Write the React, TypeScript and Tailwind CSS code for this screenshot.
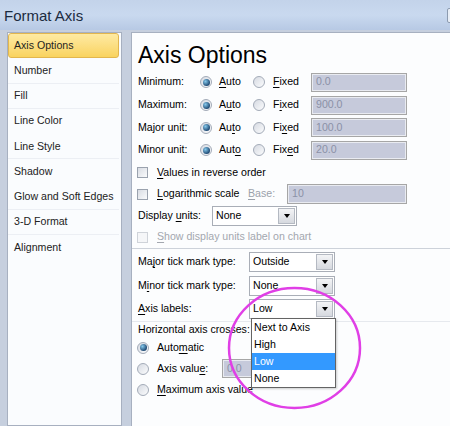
import type { ReactNode } from "react";

function U({ children }: { children: ReactNode }) {
  return <span className="underline decoration-[1px] underline-offset-[2px]">{children}</span>;
}

function Radio({ on = false }: { on?: boolean }) {
  return (
    <span className="flex h-[12px] w-[12px] shrink-0 items-center justify-center rounded-full border border-[#a3abb8] bg-gradient-to-br from-[#d6dae2] to-[#fbfcfd]">
      {on && (
        <span className="h-[7px] w-[7px] rounded-full bg-[radial-gradient(circle_at_35%_35%,#86c9ec,#1f4a74_70%)]" />
      )}
    </span>
  );
}

function Check({ disabled = false }: { disabled?: boolean }) {
  return (
    <span
      className={
        disabled
          ? "h-[11px] w-[11px] shrink-0 border border-[#cfd3d9] bg-[#f5f6f8]"
          : "h-[11px] w-[11px] shrink-0 border border-[#9aa2ae] bg-gradient-to-br from-[#d8dce3] to-[#fafbfc]"
      }
    />
  );
}

function Field({ value, className = "" }: { value: string; className?: string }) {
  return (
    <div
      className={`flex shrink-0 items-center border border-[#a6a6a6] bg-[#c6cadb] pl-[4px] text-[#8b91a7] shadow-[inset_0_0_0_1px_#e9ebf1] ${className}`}
    >
      {value}
    </div>
  );
}

function Select({ value, className = "", children }: { value: string; className?: string; children?: ReactNode }) {
  return (
    <div className={`relative flex h-[20px] shrink-0 items-center border border-[#a9aeb7] bg-white pl-[3px] pr-[1px] ${className}`}>
      <span className="flex-1">{value}</span>
      <span className="flex h-[16px] w-[17px] items-center justify-center border border-[#b4b9c2] bg-gradient-to-b from-[#f3f4f6] to-[#d6d9df]">
        <span className="h-0 w-0 border-x-[3.5px] border-t-[4px] border-x-transparent border-t-black" />
      </span>
      {children}
    </div>
  );
}

const sideItems = [
  { label: "Axis Options", active: true },
  { label: "Number", sep: true },
  { label: "Fill", sep: true },
  { label: "Line Color" },
  { label: "Line Style", sep: true },
  { label: "Shadow" },
  { label: "Glow and Soft Edges", sep: true },
  { label: "3-D Format", sep: true },
  { label: "Alignment" },
];

const unitRows = [
  { label: "Minimum:", auto: <><U>A</U>uto</>, fixed: <><U>F</U>ixed</>, value: "0.0" },
  { label: "Maximum:", auto: <>A<U>u</U>to</>, fixed: <>F<U>i</U>xed</>, value: "900.0" },
  { label: "Major unit:", auto: <>Au<U>t</U>o</>, fixed: <>Fi<U>x</U>ed</>, value: "100.0" },
  { label: "Minor unit:", auto: <>Aut<U>o</U></>, fixed: <>Fix<U>e</U>d</>, value: "20.0" },
];

export default function App() {
  return (
    <div className="relative h-[426px] w-[450px] overflow-hidden bg-[#c6cfde] font-['Liberation_Sans',Arial,sans-serif] text-[10.6px] text-black">
      {/* title bar */}
      <div className="flex h-[30px] items-center bg-gradient-to-b from-[#c3d3ea] via-[#c9d9ef] to-[#b7c9e4] pl-[4px]">
        <span className="text-[15px] leading-none text-[#1b2b40]">Format Axis</span>
        <div className="-mr-[7px] ml-auto h-[15px] w-[10px] shrink-0 rounded-[2px] border border-[#8c9bb0] bg-[#e8eef6]" />
      </div>

      <div className="flex h-[396px] gap-[9px] pl-[7px] pt-[2px]">
        {/* left nav */}
        <div className="w-[115px] shrink-0 border border-[#a7b0c0] bg-[#fafcfe]">
          {sideItems.map((it) =>
            it.active ? (
              <div
                key={it.label}
                className="mr-[2px] flex h-[25.25px] items-center rounded-[3px] border border-[#e2b64e] bg-gradient-to-b from-[#feeaa2] to-[#f9d35e] pl-[5px] text-[#1f1f1f]"
              >
                {it.label}
              </div>
            ) : (
              <div
                key={it.label}
                className={`mr-[2px] flex h-[25.25px] items-center pl-[6px] text-[#222] ${it.sep ? "shadow-[inset_0_-1px_0_#eceff4]" : ""}`}
              >
                {it.label}
              </div>
            )
          )}
        </div>

        {/* options panel */}
        <div className="flex-1 border-l border-t border-[#a7b0c0] bg-[#fcfdfe] pl-[6px]">
          <div className="mt-[11px] h-[23px] text-[23px] leading-[23px]">Axis Options</div>

          <div className="mt-[4px]">
            {unitRows.map((r) => (
              <div key={r.label} className="flex h-[22.7px] items-center">
                <span className="w-[62px] shrink-0">{r.label}</span>
                <div className="flex w-[53px] shrink-0 items-center gap-[7px]">
                  <Radio on />
                  <span>{r.auto}</span>
                </div>
                <div className="flex w-[58px] shrink-0 items-center gap-[8px]">
                  <Radio />
                  <span>{r.fixed}</span>
                </div>
                <Field value={r.value} className="h-[19px] w-[96px]" />
              </div>
            ))}
          </div>

          <div className="-ml-[1px] flex h-[21.5px] items-center gap-[9px]">
            <Check />
            <span><U>V</U>alues in reverse order</span>
          </div>
          <div className="-ml-[1px] flex h-[21.5px] items-center">
            <Check />
            <span className="ml-[9px] w-[91px] shrink-0"><U>L</U>ogarithmic scale</span>
            <span className="w-[39px] shrink-0 text-[#9ba1ab]"><U>B</U>ase:</span>
            <Field value="10" className="h-[20px] w-[120px]" />
          </div>
          <div className="flex h-[21.5px] items-center">
            <span className="w-[74px] shrink-0">Display <U>u</U>nits:</span>
            <Select value="None" className="w-[85px]" />
          </div>
          <div className="-ml-[1px] flex h-[21.5px] items-center gap-[9px] text-[#a3a7af]">
            <Check disabled />
            <span><U>S</U>how display units label on chart</span>
          </div>

          <div className="-ml-[6px] h-px bg-[#cdd2da]" />

          <div className="pt-[1.5px]">
            <div className="flex h-[23.5px] items-center">
              <span className="w-[111px] shrink-0">Ma<U>j</U>or tick mark type:</span>
              <Select value="Outside" className="w-[86px]" />
            </div>
            <div className="flex h-[23.5px] items-center">
              <span className="w-[111px] shrink-0">M<U>i</U>nor tick mark type:</span>
              <Select value="None" className="w-[86px]" />
            </div>
            <div className="flex h-[23.5px] items-center">
              <span className="w-[111px] shrink-0"><U>A</U>xis labels:</span>
              <Select value="Low" className="w-[86px]">
                <div className="absolute left-[1px] top-[18px] z-10 w-[85px] border border-[#646464] bg-white py-0 shadow-[1px_1px_2px_rgba(0,0,0,0.2)]">
                  <div className="flex h-[17px] items-center pl-[2px]">Next to Axis</div>
                  <div className="flex h-[17px] items-center pl-[2px]">High</div>
                  <div className="flex h-[17px] items-center bg-[#3399ff] pl-[2px] text-white">Low</div>
                  <div className="flex h-[17px] items-center pl-[2px]">None</div>
                </div>
              </Select>
            </div>
          </div>

          <div className="-ml-[6px] h-px bg-[#e6e9ee]" />

          <div className="flex h-[16px] items-center">Horizontal axis crosses:</div>
          <div className="-ml-[1px] flex h-[20px] items-center gap-[8px]">
            <Radio on />
            <span>Auto<U>m</U>atic</span>
          </div>
          <div className="-ml-[1px] flex h-[21.5px] items-center">
            <Radio />
            <span className="ml-[8px] w-[65px] shrink-0">Axis valu<U>e</U>:</span>
            <Field value="0.0" className="h-[19px] w-[80px] pl-[2px]" />
          </div>
          <div className="-ml-[1px] flex h-[21.5px] items-center gap-[8px]">
            <Radio />
            <span><U>M</U>aximum axis value</span>
          </div>
        </div>
      </div>

      {/* highlight ring drawn on the screenshot */}
      <svg className="pointer-events-none absolute left-[226px] top-[285px] z-20" width="138" height="126" viewBox="0 0 138 126">
        <ellipse cx="68.5" cy="63" rx="65.5" ry="60" fill="none" stroke="#e03fe6" strokeWidth="2.5" />
      </svg>
    </div>
  );
}
